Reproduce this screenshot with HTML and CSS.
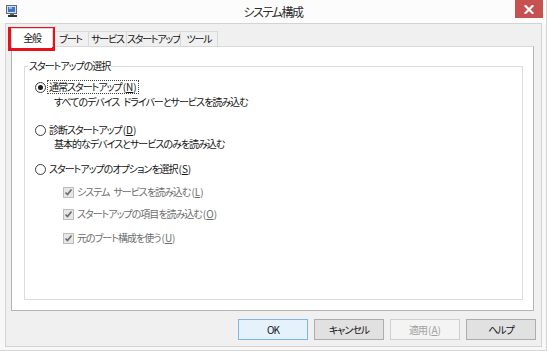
FILE: index.html
```html
<!DOCTYPE html>
<html lang="ja">
<head>
<meta charset="utf-8">
<title>システム構成</title>
<link rel="stylesheet" href="styles.css">
</head>
<body>
<div class="window">
  <div class="titlebar">
    <span class="app-icon">
      <svg width="12" height="12" viewBox="0 0 12 12">
        <rect x="0.5" y="0.5" width="10" height="8" fill="#d8dde4" stroke="#5f6b7a"/>
        <rect x="2" y="2" width="7" height="5" fill="#3b78c9"/>
        <rect x="3" y="2" width="3" height="2" fill="#8fb8ea"/>
        <rect x="4" y="9" width="4" height="1" fill="#5f6b7a"/>
        <rect x="2" y="10" width="9" height="2" fill="#2d3440"/>
      </svg>
    </span>
    <span class="title">システム構成</span>
    <span class="close">
      <svg width="10" height="9" viewBox="0 0 10 9">
        <path d="M1.5 1 L8.5 8 M8.5 1 L1.5 8" stroke="#fff" stroke-width="2.2" stroke-linecap="square"/>
      </svg>
    </span>
  </div>
  <div class="client">
    <div class="tabs">
      <div class="tab active w1">全般</div>
      <div class="tab w2">ブート</div>
      <div class="tab w3">サービス</div>
      <div class="tab w4">スタートアップ</div>
      <div class="tab w5">ツール</div>
    </div>
    <div class="panel">
      <fieldset class="group">
        <legend>スタートアップの選択</legend>
        <div class="content">
          <div class="row r1"><span class="radio checked"></span><span class="label focus">通常スタートアップ<span class="acc">(<u>N</u>)</span></span></div>
          <div class="row desc d1">すべてのデバイス&ensp;ドライバーとサービスを読み込む</div>
          <div class="row r2"><span class="radio"></span><span class="label">診断スタートアップ<span class="acc">(<u>D</u>)</span></span></div>
          <div class="row desc d2">基本的なデバイスとサービスのみを読み込む</div>
          <div class="row r3"><span class="radio"></span><span class="label">スタートアップのオプションを選択<span class="acc">(<u>S</u>)</span></span></div>
          <div class="row sub c1"><span class="check"><svg width="9" height="9" viewBox="0 0 9 9"><path d="M1.5 4.5 L3.5 6.5 L7.5 1.5" fill="none" stroke="#6b6b6b" stroke-width="1.6"/></svg></span><span class="label dis">システム&ensp;サービスを読み込む<span class="acc">(<u>L</u>)</span></span></div>
          <div class="row sub c2"><span class="check"><svg width="9" height="9" viewBox="0 0 9 9"><path d="M1.5 4.5 L3.5 6.5 L7.5 1.5" fill="none" stroke="#6b6b6b" stroke-width="1.6"/></svg></span><span class="label dis">スタートアップの項目を読み込む<span class="acc">(<u>O</u>)</span></span></div>
          <div class="row sub c3"><span class="check"><svg width="9" height="9" viewBox="0 0 9 9"><path d="M1.5 4.5 L3.5 6.5 L7.5 1.5" fill="none" stroke="#6b6b6b" stroke-width="1.6"/></svg></span><span class="label dis">元のブート構成を使う<span class="acc">(<u>U</u>)</span></span></div>
        </div>
      </fieldset>
    </div>
    <div class="buttons">
      <button class="btn default">OK</button>
      <button class="btn">キャンセル</button>
      <button class="btn disabled">適用<span class="acc">(<u>A</u>)</span></button>
      <button class="btn">ヘルプ</button>
    </div>
  </div>
  <div class="highlight"></div>
</div>
</body>
</html>
```
FILE: styles.css
```css
* { box-sizing: border-box; }
html, body { margin: 0; padding: 0; }
body {
  width: 547px;
  height: 351px;
  overflow: hidden;
  background: #fff;
  font-family: "Noto Sans CJK JP", "Noto Sans", sans-serif;
  font-size: 10px;
  letter-spacing: -1px;
  color: #141414;
  font-feature-settings: "palt";
}
.window {
  position: relative;
  width: 547px;
  height: 351px;
  background: #f8f8f8;
  border-right: 1px solid #d6d6d6;
  border-bottom: 1px solid #d6d6d6;
  display: flex;
  flex-direction: column;
}
.titlebar {
  height: 23px;
  display: grid;
  grid-template-columns: 1fr auto 1fr;
  align-items: start;
  background: #fcfcfc;
}
.app-icon { margin: 5px 0 0 6px; width: 12px; height: 12px; display: block; }
.app-icon svg { display: block; }
.title {
  font-size: 12px;
  line-height: 18px;
  padding-top: 3px;
  color: #2b2b2b;
  letter-spacing: -1.4px;
}
.close {
  justify-self: end;
  width: 28px;
  height: 18px;
  margin-right: 3px;
  background: #c75050;
  display: flex;
  align-items: center;
  justify-content: center;
}
.close svg { display: block; }
.client {
  margin: 0 4px 0 5px;
  height: 324px;
  background: #f0f0f0;
  border: 1px solid #d3d3d3;
  display: flex;
  flex-direction: column;
}
.tabs {
  display: flex;
  align-items: flex-end;
  height: 22px;
  padding-left: 5px;
}
.tab {
  height: 15px;
  line-height: 14px;
  display: flex;
  justify-content: center;
  border: 1px solid #d9d9d9;
  border-bottom: none;
  background: #f0f0f0;
  margin-right: -1px;
  white-space: nowrap;
  letter-spacing: -1.2px;
}
.tab.active {
  height: 19px;
  line-height: 17px;
  margin-bottom: -1px;
  background: #fff;
  position: relative;
  z-index: 1;
}
.w1 { width: 42px; }
.w2 { width: 37px; }
.w3 { width: 39px; }
.w4 { width: 55px; }
.w5 { width: 38px; }
.panel {
  margin: 0 7px 0 5px;
  height: 265px;
  background: #fff;
  border: 1px solid #b4b4b4;
  border-top-color: #d9d9d9;
  padding: 12px 10px 10px 12px;
  display: flex;
}
.group {
  flex: 1;
  min-width: 0;
  margin: 0;
  padding: 0;
  border: 1px solid #dcdcdc;
}
.group legend {
  margin-left: 3px;
  padding: 0 1px;
  line-height: 14px;
}
.content {
  padding-left: 10px;
  display: flex;
  flex-direction: column;
}
.row {
  display: flex;
  align-items: center;
  height: 14px;
  line-height: 14px;
  white-space: nowrap;
}
.acc { letter-spacing: 0; margin-left: 1px; }
.radio {
  width: 11px;
  height: 11px;
  border-radius: 50%;
  border: 1px solid #3c3c3c;
  background: #fff;
  margin-right: 1px;
  display: flex;
  align-items: center;
  justify-content: center;
  flex: none;
}
.radio.checked::after {
  content: "";
  width: 5px;
  height: 5px;
  border-radius: 50%;
  background: #1a1a1a;
}
.check {
  width: 11px;
  height: 11px;
  border: 1px solid #bcbcbc;
  background: #e6e6e6;
  margin-right: 1px;
  display: flex;
  align-items: center;
  justify-content: center;
  flex: none;
}
.check svg { display: block; }
.label {
  border: 1px dotted transparent;
  line-height: 12px;
  padding: 0 1px 0 1px;
}
.label.focus { border-color: #444; }
.label.dis { color: #6d6d6d; }
.desc { padding-left: 19px; }
.sub { padding-left: 28px; }
.r1 { margin-top: 7px; }
.d1 { margin-top: 1px; }
.r2 { margin-top: 14px; }
.d2 { margin-top: 0; }
.r3 { margin-top: 11px; }
.c1 { margin-top: 9px; }
.c2 { margin-top: 8px; }
.c3 { margin-top: 10px; }
.buttons {
  display: flex;
  justify-content: flex-end;
  gap: 6px;
  margin: 8px 5px 0 0;
}
.btn {
  width: 70px;
  height: 21px;
  padding: 0;
  font-family: inherit;
  font-size: 10px;
  letter-spacing: -1px;
  font-feature-settings: "palt";
  color: #141414;
  background: #e1e1e1;
  border: 1px solid #adadad;
  border-radius: 0;
  line-height: 19px;
}
.btn.default { border-color: #7eb4ea; background: #e5f1fb; }
.btn.disabled { color: #a0a0a0; background: #f4f4f4; border-color: #cfcfcf; }
.highlight {
  position: absolute;
  left: 8px;
  top: 27px;
  width: 47px;
  height: 24px;
  border: 3px solid #e8101a;
}
```
